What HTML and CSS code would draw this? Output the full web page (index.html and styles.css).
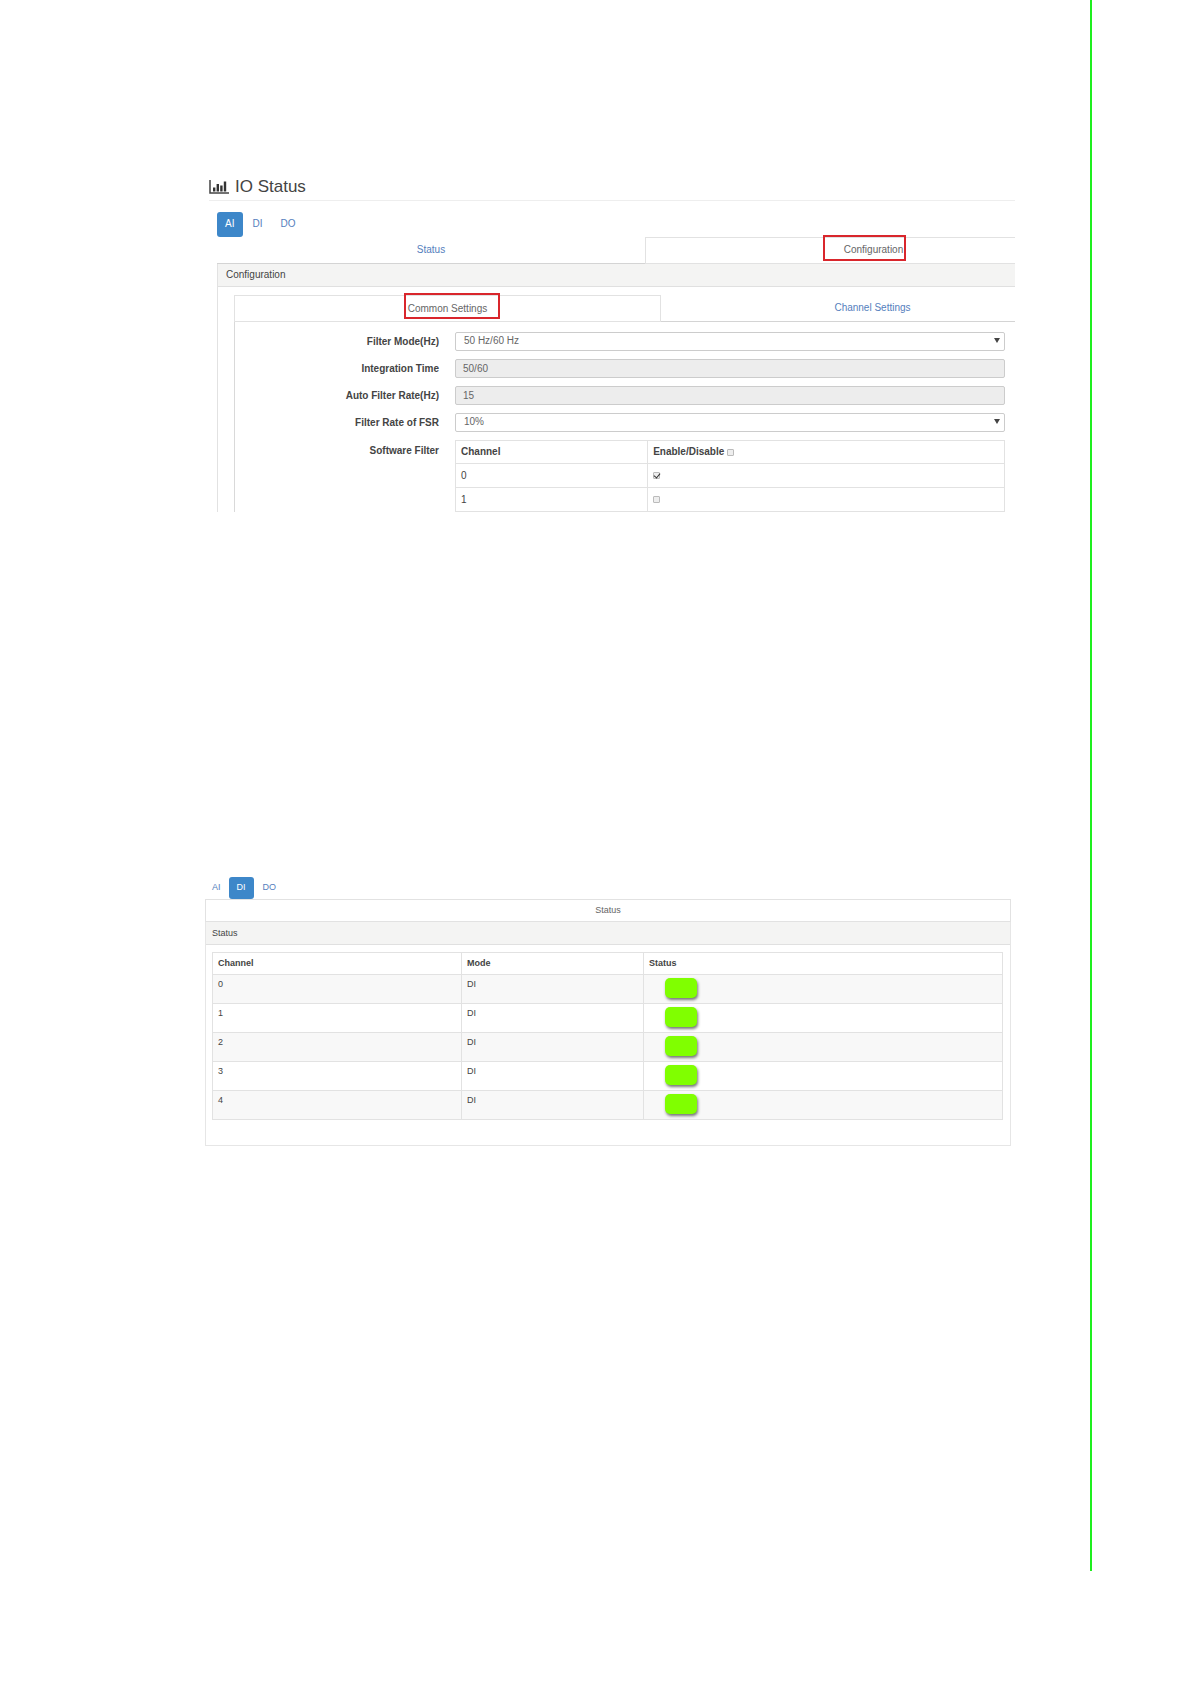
FILE: index.html
```html
<!DOCTYPE html>
<html lang="en">
<head>
<meta charset="utf-8">
<meta name="viewport" content="width=device-width, initial-scale=1">
<title>IO Status</title>
<link rel="stylesheet" href="styles.css">
</head>
<body>
<main class="sheet">
  <section class="figure figure-config">
    <h1 class="title">
      <svg class="title-icon" viewBox="0 0 20 14" width="20" height="14" aria-hidden="true">
        <path d="M1 0V13H20" fill="none" stroke="#444" stroke-width="1.5"/>
        <path d="M4 7.500h2.400v4H4zM7.600 4h2.400v7.500H7.600zM11.200 5.500h2.400v6h-2.400zM14.800 1.500h2.400v10h-2.400z" fill="#333"/>
      </svg>
      IO Status
    </h1>
    <div class="figure-body">
      <nav class="pills">
        <a class="pill active" href="#ai">AI</a>
        <a class="pill" href="#di">DI</a>
        <a class="pill" href="#do">DO</a>
      </nav>
      <nav class="tabs tabs-main">
        <a class="tab" href="#status">Status</a>
        <a class="tab active" href="#configuration">Configuration<span class="mark mark-configuration"></span></a>
      </nav>
      <div class="panel">
        <h2 class="panel-heading">Configuration</h2>
        <div class="panel-body">
          <nav class="tabs tabs-inner">
            <a class="tab active" href="#common">Common Settings<span class="mark mark-common"></span></a>
            <a class="tab" href="#channel">Channel Settings</a>
          </nav>
          <form class="settings">
            <label for="mode">Filter Mode(Hz)</label>
            <div class="select"><select id="mode"><option>50 Hz/60 Hz</option></select></div>
            <label for="time">Integration Time</label>
            <input class="field" id="time" type="text" value="50/60" readonly>
            <label for="rate">Auto Filter Rate(Hz)</label>
            <input class="field" id="rate" type="text" value="15" readonly>
            <label for="fsr">Filter Rate of FSR</label>
            <div class="select"><select id="fsr"><option>10%</option></select></div>
            <span class="group-label" id="filter">Software Filter</span>
            <table class="filter-table" aria-labelledby="filter">
              <thead>
                <tr><th class="channel">Channel</th><th><label class="check-label" for="all">Enable/Disable</label><input class="check" id="all" type="checkbox"></th></tr>
              </thead>
              <tbody>
                <tr><td>0</td><td><input class="check" type="checkbox" aria-label="Channel 0" checked></td></tr>
                <tr><td>1</td><td><input class="check" type="checkbox" aria-label="Channel 1"></td></tr>
              </tbody>
            </table>
          </form>
        </div>
      </div>
    </div>
  </section>

  <section class="figure figure-status">
    <nav class="pills">
      <a class="pill" href="#ai">AI</a>
      <a class="pill active" href="#di">DI</a>
      <a class="pill" href="#do">DO</a>
    </nav>
    <nav class="tabs">
      <a class="tab active" href="#status">Status</a>
    </nav>
    <div class="panel">
      <h2 class="panel-heading">Status</h2>
      <div class="panel-body">
        <table class="status-table">
          <thead>
            <tr><th class="channel">Channel</th><th class="mode">Mode</th><th>Status</th></tr>
          </thead>
          <tbody>
            <tr><td>0</td><td>DI</td><td><button class="led" type="button" aria-label="Channel 0 on"></button></td></tr>
            <tr><td>1</td><td>DI</td><td><button class="led" type="button" aria-label="Channel 1 on"></button></td></tr>
            <tr><td>2</td><td>DI</td><td><button class="led" type="button" aria-label="Channel 2 on"></button></td></tr>
            <tr><td>3</td><td>DI</td><td><button class="led" type="button" aria-label="Channel 3 on"></button></td></tr>
            <tr><td>4</td><td>DI</td><td><button class="led" type="button" aria-label="Channel 4 on"></button></td></tr>
          </tbody>
        </table>
      </div>
    </div>
  </section>
</main>
</body>
</html>
```
FILE: styles.css
```css
* {
  box-sizing: border-box;
}

body {
  margin: 0;
  background: #fff;
  color: #444;
  font-family: "Liberation Sans", Arial, sans-serif;
  font-size: 10px;
  line-height: 14px;
}

a {
  color: #5580bd;
  text-decoration: none;
}

/* Page with the green rule down its right side */
.sheet {
  margin-right: 98px;
  padding: 175px 75px 425px 205px;
  border-right: 2px solid #1eef1e;
}

.title {
  display: flex;
  align-items: center;
  gap: 6px;
  margin: 0;
  padding-bottom: 1px;
  border-bottom: 1px solid #eee;
  color: #444;
  font-size: 17px;
  font-weight: 400;
  line-height: 24px;
}

.pills {
  display: flex;
}

.pill {
  padding: 5px 9px 6px 8px;
  border-radius: 3px;
}

.pill + .pill {
  padding-left: 9px;
}

.pill.active {
  background: #3d87c9;
  color: #fff;
}

.tabs {
  display: flex;
}

.tab {
  flex: 1;
  position: relative;
  padding: 5px 0;
  border-bottom: 1px solid #d4d4d4;
  text-align: center;
}

.tab.active {
  border: 1px solid #e2e2e2;
  color: #666;
}

.panel-heading {
  margin: 0;
  background: #f4f4f3;
  border-bottom: 1px solid #e0e0e0;
  font-size: inherit;
  font-weight: 400;
}

table {
  width: 100%;
  border-collapse: collapse;
  table-layout: fixed;
}

th,
td {
  border: 1px solid #e2e2e2;
  text-align: left;
}

/* Configuration view */
.figure-config {
  margin-left: 4px;
}

.figure-body {
  padding: 11px 0 0 8px;
}

.tabs-main .tab,
.tabs-inner .tab {
  height: 27px;
  padding-top: 6px;
}

.tabs-main .tab.active {
  padding-top: 5px;
}

.tabs-main .tab:first-child {
  flex: 0 0 428px;
}

.tabs-main .tab.active {
  padding-left: 86px;
  border-right: 0;
}

.tabs-inner .tab:first-child {
  flex: 0 0 427px;
}

.tabs-inner .tab:last-child {
  padding-left: 69px;
}

/* Red highlight frames drawn over the tabs */
.mark {
  position: absolute;
  border: 2px solid #d9262c;
}

.mark-configuration {
  top: -3px;
  left: 177px;
  width: 83px;
  height: 26px;
}

.mark-common {
  top: -3px;
  left: 169px;
  width: 96px;
  height: 26px;
}

.figure-config .panel {
  border-left: 1px solid #e2e2e2;
}

.figure-config .panel-heading {
  padding: 4px 8px;
}

.figure-config .panel-body {
  padding: 8px 0 0 16px;
}

.settings {
  display: grid;
  grid-template-columns: 204fr 550fr;
  gap: 8px 16px;
  padding: 10px 10px 0 0;
  border-left: 1px solid #d9d9d9;
}

.settings > label,
.group-label {
  padding-top: 3px;
  font-weight: 700;
  text-align: right;
}

.group-label {
  padding-top: 4px;
}

.select {
  position: relative;
}

.select::after {
  content: "";
  position: absolute;
  top: 6px;
  right: 5px;
  border: 3px solid transparent;
  border-top: 5px solid #444;
  border-bottom: 0;
}

.select select,
.field {
  display: block;
  width: 100%;
  height: 19px;
  margin: 0;
  padding: 0 8px 1px;
  border: 1px solid #ccc;
  border-radius: 2px;
  background: #fff;
  color: #666;
  font: inherit;
  appearance: none;
}

.field {
  padding: 0 7px 1px;
  background: #ededed;
}

.filter-table th,
.filter-table td {
  height: 23px;
  padding: 0 5px;
}

.filter-table td {
  height: 24px;
}

.filter-table .channel {
  width: 35%;
}

.check-label {
  vertical-align: middle;
}

.check {
  position: relative;
  width: 7px;
  height: 7px;
  margin: 0;
  border: 1px solid #bbb;
  border-radius: 1px;
  background: #eee;
  appearance: none;
  vertical-align: middle;
}

.check-label + .check {
  margin-left: 3px;
}

.check:checked::after {
  content: "";
  position: absolute;
  top: -1px;
  left: 1px;
  width: 3px;
  height: 5px;
  border: solid #333;
  border-width: 0 1px 1px 0;
  transform: rotate(40deg);
}

/* Digital input view */
.figure-status {
  margin: 365px 4px 0 0;
  font-size: 9px;
  line-height: 12px;
}

.figure-status .pill {
  padding: 4px 8px 6px;
}

.figure-status .pills .pill:first-child {
  padding-left: 7px;
}

.figure-status .pills .pill:last-child {
  padding-left: 9px;
}

.figure-status .tab {
  padding: 4px 0 5px;
}

.figure-status .panel {
  border: 1px solid #e6e6e6;
  border-top: 0;
}

.figure-status .panel-heading {
  padding: 5px 6px;
}

.figure-status .panel-body {
  padding: 7px 7px 25px 6px;
}

.status-table th,
.status-table td {
  height: 29px;
  padding: 3px 5px 0;
  vertical-align: top;
}

.status-table th {
  height: 22px;
  padding-top: 4px;
}

.status-table .channel {
  width: 249px;
}

.status-table .mode {
  width: 182px;
}

.status-table tbody tr:nth-child(odd) {
  background: #f8f8f8;
}

.led {
  display: block;
  width: 32px;
  height: 20px;
  margin: 0 0 0 16px;
  padding: 0;
  border: 0;
  border-radius: 5px;
  background: #80ff00;
  box-shadow: 1px 2px 3px #777;
}
```
